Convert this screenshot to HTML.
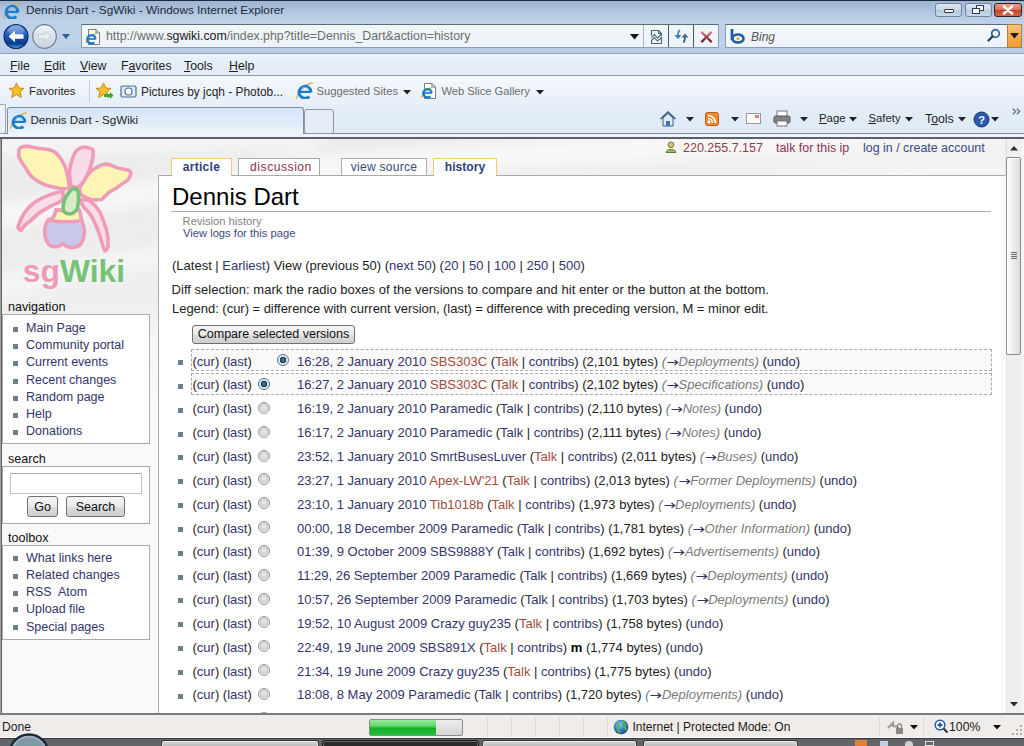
<!DOCTYPE html>
<html><head><meta charset="utf-8">
<style>
*{margin:0;padding:0;box-sizing:border-box}
html,body{width:1024px;height:746px;overflow:hidden;background:#dfe8f4;font-family:"Liberation Sans",sans-serif}
.a{position:absolute}
.ui{font-family:"Liberation Sans",sans-serif;font-size:12px;color:#1e1e1e;white-space:nowrap}
/* title bar */
#title{left:0;top:0;width:1024px;height:21px;background:linear-gradient(#9fb4cf,#b3c7e0 60%,#bcd0e8);border-top:1px solid #1d2b3e}
#nav{left:0;top:21px;width:1024px;height:33px;background:linear-gradient(#bdd0e8,#bfd2e9 70%,#b7cbe4);border-bottom:1px solid #8fa2b8}
#menu{left:0;top:54px;width:1024px;height:22px;background:linear-gradient(#ecf6f7,#e6eff9 30%,#e2ebf7);border-bottom:1px solid #8a98aa}
#fav{left:0;top:76px;width:1024px;height:30px;background:linear-gradient(#f5f9fd,#e6eef8)}
#tabs{left:0;top:106px;width:1024px;height:28px;background:linear-gradient(#e4edf8,#dfeaf6);border-bottom:1px solid #7f8c98}
#darkline{left:0;top:134px;width:1024px;height:5px;background:linear-gradient(#eff5fb 0,#eff5fb 3px,#5c6066 3px,#5c6066 5px)}
#page{left:2px;top:139px;width:1003px;height:574px;background:#f9f9f9;overflow:hidden}
#status{left:0;top:713px;width:1024px;height:28px;background:#f0eeed;border-top:1px solid #8c8c8c}
#task{left:0;top:740px;width:1024px;height:6px;background:#4e535a}
.t{line-height:1;white-space:nowrap}
.t12{font-size:12.1px;line-height:1;white-space:nowrap}
.t13{font-size:13px;line-height:1;white-space:nowrap;color:#222}
.l{color:#34346a}.r{color:#a24c3e}.c{color:#7a7a7a;font-style:italic}
.tab{top:158px;height:18px;border:1px solid #aaa;border-bottom:none;background:#fff;font-size:12.1px;line-height:1;text-align:center;padding-top:1.9px;white-space:nowrap}
.btn{border:1px solid #707070;border-radius:3px;background:linear-gradient(#f4f4f4 0%,#ebebeb 50%,#dddddd 51%,#cfcfcf 100%);font-size:12.5px;line-height:1;text-align:center;padding-top:2px;color:#111;white-space:nowrap}
.bul{width:5px;height:5px;background:#6e7f8c}
.radio{width:12px;height:12px;border-radius:50%;border:1px solid #979797;background:radial-gradient(circle at 50% 45%,#ececec 0,#d6d6d6 3.3px,#c2c2c2 4px,#f4f4f4 4.8px)}
.radio.on{border-color:#4f6f86;background:radial-gradient(circle at 50% 50%,#5b8fae 0,#1d4a68 2.2px,#1b3f5a 3px,#dfe9f0 3.6px,#f4f8fb 100%)}
.arr{display:inline-block;vertical-align:baseline;margin-right:-0.5px}
.dash{border:1px dashed #aaa;background:#f9f9f9}
.t12b{font-size:12.6px;line-height:1;white-space:nowrap;color:#111}
.t12s{font-size:12.5px;line-height:1;white-space:nowrap}
.pbox{border:1px solid #aaa;background:#fff}
</style></head><body>

<!-- TITLE BAR -->
<div id="title" class="a"></div>
<svg class="a" style="left:3px;top:2px" width="17" height="17" viewBox="0 0 16 16">
 <path d="M0.8 15 C1.5 10 6.5 2.5 15.2 1" stroke="#d9b458" stroke-width="1.5" fill="none" stroke-linecap="round"/>
 <path d="M14.1 9.6 A5.6 5.6 0 1 0 12.5 13.6" stroke="#1b7ccc" stroke-width="2.7" fill="none"/>
 <path d="M3.3 9.3 H14.2" stroke="#1b7ccc" stroke-width="2.1"/>
 <path d="M5 7 A4 4 0 0 1 12 7" stroke="#8fd0f8" stroke-width="1" fill="none" opacity=".7"/>
</svg>
<div class="a ui" style="left:26px;top:2.6px;font-size:11.8px;color:#1b2a3b">Dennis Dart - SgWiki - Windows Internet Explorer</div>
<!-- window buttons -->
<div class="a" style="left:935px;top:3px;width:27px;height:14px;border:1px solid #6f84a0;border-radius:3px;background:linear-gradient(#dde7f3 0%,#c8d6e8 50%,#b6c8df 51%,#c8d8ec 100%)"></div>
<div class="a" style="left:944px;top:9px;width:10px;height:4px;border:1px solid #2e3b4c;background:#fff;border-radius:1px"></div>
<div class="a" style="left:965px;top:3px;width:27px;height:14px;border:1px solid #6f84a0;border-radius:3px;background:linear-gradient(#dde7f3 0%,#c8d6e8 50%,#b6c8df 51%,#c8d8ec 100%)"></div>
<div class="a" style="left:976px;top:5px;width:8px;height:6px;border:1.5px solid #2e3b4c;background:#fff"></div>
<div class="a" style="left:972px;top:8px;width:8px;height:6px;border:1.5px solid #2e3b4c;background:#fff"></div>
<div class="a" style="left:994px;top:3px;width:28px;height:14px;border:1px solid #3c1f1f;border-radius:3px;background:linear-gradient(#e8a092 0%,#d86c58 50%,#c2412a 51%,#d5664c 100%)"></div>
<svg class="a" style="left:1001px;top:5px" width="14" height="10" viewBox="0 0 14 10"><path d="M3 1.5 L11 8.5 M11 1.5 L3 8.5" stroke="#fff" stroke-width="2.6" stroke-linecap="round"/></svg>

<!-- NAV BAR -->
<div id="nav" class="a"></div>
<svg class="a" style="left:2px;top:22px" width="60" height="30" viewBox="0 0 60 30">
 <defs>
  <linearGradient id="bk" x1="0" y1="0" x2="0" y2="1"><stop offset="0" stop-color="#6fa6e8"/><stop offset=".45" stop-color="#1f57b8"/><stop offset=".8" stop-color="#0d3b8c"/><stop offset="1" stop-color="#3aa8e8"/></linearGradient>
  <linearGradient id="fw" x1="0" y1="0" x2="0" y2="1"><stop offset="0" stop-color="#f2f5f9"/><stop offset=".5" stop-color="#d9e1ea"/><stop offset="1" stop-color="#c6d2de"/></linearGradient>
 </defs>
 <circle cx="14" cy="14.5" r="12" fill="url(#bk)" stroke="#0e2c66" stroke-width="1.2"/>
 <ellipse cx="14" cy="8.5" rx="8" ry="4.5" fill="#fff" opacity=".22"/>
 <path d="M6.5 14.5 L13 8.8 L13 12.3 L21.5 12.3 L21.5 16.7 L13 16.7 L13 20.2 Z" fill="#fff"/>
 <circle cx="42.5" cy="14.5" r="11.8" fill="url(#fw)" stroke="#6f7f90" stroke-width="1.2"/>
 <path d="M49 14.5 L43 9.5 L43 12.5 L36 12.5 L36 16.5 L43 16.5 L43 19.5 Z" fill="#e8edf2" stroke="#c2ccd6" stroke-width=".8"/>
</svg>
<svg class="a" style="left:61px;top:33px" width="10" height="7" viewBox="0 0 10 7"><path d="M1 1 L9 1 L5 6 Z" fill="#2f5e92"/></svg>
<!-- address box -->
<div class="a" style="left:81px;top:24px;width:638px;height:24px;border:1px solid #8e9cad;border-top-color:#5d6b7c;background:linear-gradient(#eef7f6,#eef2fa)"></div>
<svg class="a" style="left:85px;top:28px" width="16" height="18" viewBox="0 0 16 18">
 <path d="M3.5 1.5 L11 1.5 L14.5 5 L14.5 16.5 L3.5 16.5 Z" fill="#fdfdfd" stroke="#7a7a7a" stroke-width="1"/>
 <path d="M11 1.5 L11 5 L14.5 5" stroke="#7a7a7a" stroke-width="1" fill="none"/>
 <path d="M0.8 15.5 C1.5 12 5 7 11 5.5" stroke="#d9b458" stroke-width="1.3" fill="none"/>
 <path d="M10.6 11.2 A4.2 4.2 0 1 0 9.4 14.2" stroke="#1b7ccc" stroke-width="2.2" fill="none"/>
 <path d="M2.5 11 H10.7" stroke="#1b7ccc" stroke-width="1.7"/>
</svg>
<div class="a ui" style="left:106px;top:29.4px;font-size:12.35px;color:#6d6d6d">http://www.<span style="color:#1a1a1a">sgwiki.com</span>/index.php?title=Dennis_Dart&amp;action=history</div>
<svg class="a" style="left:630px;top:34px" width="9" height="6" viewBox="0 0 9 6"><path d="M0 0 L9 0 L4.5 5.5 Z" fill="#111"/></svg>
<div class="a" style="left:668px;top:25px;width:1px;height:22px;background:#4a5868"></div>
<div class="a" style="left:693px;top:25px;width:1px;height:22px;background:#4a5868"></div>
<div class="a" style="left:643px;top:25px;width:1px;height:22px;background:#aab6c4"></div>
<svg class="a" style="left:650px;top:29px" width="13" height="16" viewBox="0 0 13 16">
 <path d="M1.5 7 L1.5 1.5 L8.5 1.5 L11.5 4.5 L11.5 7 M8.5 1.5 L8.5 4.5 L11.5 4.5" stroke="#456868" stroke-width="1.1" fill="none"/>
 <path d="M1.5 9 L4.5 5.5 L7.5 9 L11.5 5 M1.5 14.5 L1.5 11.5 L4.5 8.5 L7.5 12 L11.5 8.5 L11.5 14.5 Z" stroke="#456868" stroke-width="1.1" fill="none"/>
</svg>
<svg class="a" style="left:673px;top:29px" width="18" height="15" viewBox="0 0 18 15">
 <path d="M7 1 C5.5 2 5 3.5 5 6" stroke="#4d88c4" stroke-width="1.8" fill="none"/>
 <path d="M1.5 6 L8.5 6 L5 10 Z" fill="#3a7ab8"/>
 <path d="M10.5 13.5 C11.5 12 12 10 12 8" stroke="#2d4f86" stroke-width="1.8" fill="none"/>
 <path d="M8.5 8.5 L15.5 8.5 L12 4.5 Z" fill="#3f6aa8"/>
</svg>
<svg class="a" style="left:700px;top:31px" width="13" height="12" viewBox="0 0 13 12"><defs><linearGradient id="xg" x1="0" y1="0" x2="0" y2="1"><stop offset="0" stop-color="#d87080"/><stop offset="1" stop-color="#6a1a24"/></linearGradient></defs><path d="M2 1.5 L11 10.5 M11 1.5 L2 10.5" stroke="url(#xg)" stroke-width="2.3" stroke-linecap="round"/></svg>
<!-- search box -->
<div class="a" style="left:725px;top:24px;width:282px;height:24px;border:1px solid #8e9cad;border-top-color:#5d6b7c;border-right:none;background:linear-gradient(#f3f8f9,#eef2fa)"></div>
<div class="a" style="left:1007px;top:24px;width:15px;height:24px;border:1px solid #b08040;background:linear-gradient(#f5c37a,#ef9a30)"></div>
<svg class="a" style="left:1010px;top:33px" width="9" height="6" viewBox="0 0 9 6"><path d="M0 0 L9 0 L4.5 5.5 Z" fill="#2a1a0a"/></svg>
<svg class="a" style="left:729px;top:27px" width="18" height="18" viewBox="0 0 18 18">
 <path d="M3 2 L3 13" stroke="#1f5f9f" stroke-width="2.8"/>
 <ellipse cx="9" cy="11.5" rx="5.5" ry="4" fill="none" stroke="#1f5f9f" stroke-width="2.6"/>
 <circle cx="9" cy="11.5" r="1.6" fill="#f0a030"/>
</svg>
<div class="a ui" style="left:751px;top:30px;font-size:12px;font-style:italic;color:#555">Bing</div>
<svg class="a" style="left:987px;top:28px" width="14" height="14" viewBox="0 0 14 14">
 <circle cx="8.5" cy="5.5" r="3.8" fill="none" stroke="#2d6aa0" stroke-width="1.8"/>
 <path d="M5.7 8.3 L1.5 12.5" stroke="#1d3c5c" stroke-width="2.2" stroke-linecap="round"/>
</svg>

<!-- MENU BAR -->
<div id="menu" class="a"></div>
<div class="a ui" style="left:10px;top:59px;font-size:12.3px;color:#1e1e1e"><u>F</u>ile</div>
<div class="a ui" style="left:44px;top:59px;font-size:12.3px"><u>E</u>dit</div>
<div class="a ui" style="left:80px;top:59px;font-size:12.3px"><u>V</u>iew</div>
<div class="a ui" style="left:121px;top:59px;font-size:12.3px">F<u>a</u>vorites</div>
<div class="a ui" style="left:184px;top:59px;font-size:12.3px"><u>T</u>ools</div>
<div class="a ui" style="left:229px;top:59px;font-size:12.3px"><u>H</u>elp</div>

<!-- FAVORITES BAR -->
<div id="fav" class="a"></div>
<svg class="a" style="left:8px;top:82px" width="17" height="17" viewBox="0 0 17 17"><path d="M8.5 1 L10.8 6 L16 6.4 L12 9.8 L13.3 15.5 L8.5 12.5 L3.7 15.5 L5 9.8 L1 6.4 L6.2 6 Z" fill="#f6c12c" stroke="#c98a15" stroke-width="1"/></svg>
<div class="a ui" style="left:29px;top:85px;font-size:11.3px">Favorites</div>
<div class="a" style="left:89px;top:80px;width:1px;height:22px;background:#c2ccd8"></div>
<svg class="a" style="left:95px;top:82px" width="19" height="18" viewBox="0 0 19 18"><path d="M8.5 1 L10.8 6 L16 6.4 L12 9.8 L13.3 15.5 L8.5 12.5 L3.7 15.5 L5 9.8 L1 6.4 L6.2 6 Z" fill="#f6c12c" stroke="#c98a15" stroke-width="1"/><path d="M9 12 L15 12 L15 10 L18.5 13.5 L15 17 L15 15 L9 15 Z" fill="#3caa3c"/></svg>
<svg class="a" style="left:120px;top:84px" width="17" height="14" viewBox="0 0 17 14"><rect x="1" y="2" width="15" height="11" rx="1.5" fill="#dfe9f3" stroke="#4a6f98" stroke-width="1.2"/><circle cx="8.5" cy="7.5" r="3.5" fill="#fff" stroke="#4a6f98" stroke-width="1.2"/></svg>
<div class="a ui" style="left:141px;top:84.5px;font-size:11.9px">Pictures by jcqh - Photob...</div>
<svg class="a" style="left:296px;top:82px" width="17" height="17" viewBox="0 0 16 16">
 <path d="M0.8 15 C1.5 10 6.5 2.5 15.2 1" stroke="#d9b458" stroke-width="1.5" fill="none" stroke-linecap="round"/>
 <path d="M14.1 9.6 A5.6 5.6 0 1 0 12.5 13.6" stroke="#1b7ccc" stroke-width="2.7" fill="none"/>
 <path d="M3.3 9.3 H14.2" stroke="#1b7ccc" stroke-width="2.1"/>
 <path d="M5 7 A4 4 0 0 1 12 7" stroke="#8fd0f8" stroke-width="1" fill="none" opacity=".7"/>
</svg>
<div class="a ui" style="left:316.5px;top:85px;font-size:11.2px;color:#6b6b6b">Suggested Sites</div>
<svg class="a" style="left:402.5px;top:89.5px" width="8" height="5" viewBox="0 0 8 5"><path d="M0 0 L8 0 L4 4.5 Z" fill="#222"/></svg>
<svg class="a" style="left:421px;top:82px" width="16" height="18" viewBox="0 0 16 18">
 <path d="M3.5 1.5 L11 1.5 L14.5 5 L14.5 16.5 L3.5 16.5 Z" fill="#fdfdfd" stroke="#7a7a7a" stroke-width="1"/>
 <path d="M11 1.5 L11 5 L14.5 5" stroke="#7a7a7a" stroke-width="1" fill="none"/>
 <path d="M0.8 15.5 C1.5 12 5 7 11 5.5" stroke="#d9b458" stroke-width="1.3" fill="none"/>
 <path d="M10.6 11.2 A4.2 4.2 0 1 0 9.4 14.2" stroke="#1b7ccc" stroke-width="2.2" fill="none"/>
 <path d="M2.5 11 H10.7" stroke="#1b7ccc" stroke-width="1.7"/>
</svg>
<div class="a ui" style="left:441.5px;top:85px;font-size:11.15px;color:#6b6b6b">Web Slice Gallery</div>
<svg class="a" style="left:536px;top:89.5px" width="8" height="5" viewBox="0 0 8 5"><path d="M0 0 L8 0 L4 4.5 Z" fill="#222"/></svg>

<!-- TAB BAR -->
<div id="tabs" class="a"></div>
<div class="a" style="left:-6px;top:104px;width:12px;height:30px;border:1px solid #9aa9bb;border-radius:0 0 3px 0;background:linear-gradient(#eef3f9,#e6eef8)"></div>
<div class="a" style="left:7px;top:107px;width:297px;height:27px;border:1px solid #7d8ea3;border-bottom:none;border-radius:3px 3px 0 0;background:linear-gradient(#d4e4f7,#e2ecf9 60%,#eef4fb)"></div>
<svg class="a" style="left:10px;top:112px" width="17" height="17" viewBox="0 0 16 16">
 <path d="M0.8 15 C1.5 10 6.5 2.5 15.2 1" stroke="#d9b458" stroke-width="1.5" fill="none" stroke-linecap="round"/>
 <path d="M14.1 9.6 A5.6 5.6 0 1 0 12.5 13.6" stroke="#1b7ccc" stroke-width="2.7" fill="none"/>
 <path d="M3.3 9.3 H14.2" stroke="#1b7ccc" stroke-width="2.1"/>
 <path d="M5 7 A4 4 0 0 1 12 7" stroke="#8fd0f8" stroke-width="1" fill="none" opacity=".7"/>
</svg>
<div class="a ui" style="left:30.5px;top:113.3px;font-size:11.6px">Dennis Dart - SgWiki</div>
<div class="a" style="left:304px;top:109px;width:30px;height:25px;border:1px solid #8c98a8;border-radius:3px;background:#e3ecf7"></div>
<!-- command bar -->
<svg class="a" style="left:659px;top:110px" width="18" height="18" viewBox="0 0 18 18">
 <path d="M1.5 9 L9 2 L16.5 9" stroke="#3a5f8a" stroke-width="1.6" fill="none"/>
 <path d="M4 8 L4 16 L14 16 L14 8 L9 3.5 Z" fill="#dfe8f2" stroke="#3a5f8a" stroke-width="1"/>
 <rect x="7" y="11" width="4" height="5" fill="#3a74b4"/>
</svg>
<svg class="a" style="left:686px;top:117px" width="8" height="5" viewBox="0 0 8 5"><path d="M0 0 L8 0 L4 4.5 Z" fill="#222"/></svg>
<svg class="a" style="left:705px;top:112px" width="14" height="14" viewBox="0 0 14 14"><rect x=".5" y=".5" width="13" height="13" rx="2" fill="#ee8a2c" stroke="#b4601a"/><circle cx="4" cy="10" r="1.4" fill="#fff"/><path d="M3 6.5 A4.5 4.5 0 0 1 7.5 11 M3 3.5 A7.5 7.5 0 0 1 10.5 11" stroke="#fff" stroke-width="1.6" fill="none"/></svg>
<svg class="a" style="left:731px;top:117px" width="8" height="5" viewBox="0 0 8 5"><path d="M0 0 L8 0 L4 4.5 Z" fill="#222"/></svg>
<svg class="a" style="left:746px;top:113px" width="15" height="11" viewBox="0 0 15 11"><rect x=".5" y=".5" width="14" height="10" fill="#fafafa" stroke="#9a9a9a"/><rect x="9" y="2" width="4" height="3" fill="#d08080"/></svg>
<svg class="a" style="left:773px;top:110px" width="18" height="17" viewBox="0 0 18 17"><rect x="4" y="1" width="10" height="6" fill="#fff" stroke="#777"/><rect x="1" y="6" width="16" height="7" rx="1.5" fill="#7d8389" stroke="#555"/><rect x="4" y="11" width="10" height="5" fill="#fff" stroke="#777"/></svg>
<svg class="a" style="left:800px;top:117px" width="8" height="5" viewBox="0 0 8 5"><path d="M0 0 L8 0 L4 4.5 Z" fill="#222"/></svg>
<div class="a ui" style="left:819px;top:111.7px;font-size:11.4px"><u>P</u>age</div>
<svg class="a" style="left:849px;top:117px" width="8" height="5" viewBox="0 0 8 5"><path d="M0 0 L8 0 L4 4.5 Z" fill="#222"/></svg>
<div class="a ui" style="left:868.5px;top:111.7px;font-size:11.3px"><u>S</u>afety</div>
<svg class="a" style="left:905px;top:117px" width="8" height="5" viewBox="0 0 8 5"><path d="M0 0 L8 0 L4 4.5 Z" fill="#222"/></svg>
<div class="a ui" style="left:925px;top:111.7px;font-size:12.3px">T<u>o</u>ols</div>
<svg class="a" style="left:958px;top:117px" width="8" height="5" viewBox="0 0 8 5"><path d="M0 0 L8 0 L4 4.5 Z" fill="#222"/></svg>
<svg class="a" style="left:973px;top:111px" width="17" height="17" viewBox="0 0 17 17"><circle cx="8.5" cy="8.5" r="7.5" fill="#2c58b0" stroke="#1a3670"/><text x="8.5" y="13" font-family="Liberation Sans" font-weight="bold" font-size="11" fill="#fff" text-anchor="middle">?</text></svg>
<svg class="a" style="left:991px;top:117px" width="8" height="5" viewBox="0 0 8 5"><path d="M0 0 L8 0 L4 4.5 Z" fill="#222"/></svg>
<svg class="a" style="left:1012px;top:108px" width="9" height="7" viewBox="0 0 9 7"><path d="M0.8 0.8 L3.6 3.5 L0.8 6.2 M4.8 0.8 L7.6 3.5 L4.8 6.2" stroke="#5f6f80" stroke-width="1.3" fill="none"/></svg>

<div id="darkline" class="a"></div>

<!-- PAGE -->
<div class="a" style="left:1px;top:139px;width:1px;height:575px;background:#626262"></div>
<div id="page" class="a"></div>
<svg class="a" style="left:2px;top:139px" width="1003" height="260" viewBox="0 0 1003 260">
 <defs>
  <linearGradient id="bgg" x1="0" y1="0" x2="0" y2="1"><stop offset="0" stop-color="#ebebeb"/><stop offset=".55" stop-color="#ededed"/><stop offset="1" stop-color="#f9f9f9"/></linearGradient>
  <filter id="bl" x="-20%" y="-50%" width="140%" height="200%"><feGaussianBlur stdDeviation="9"/></filter>
 </defs>
 <rect width="1003" height="260" fill="url(#bgg)"/>
 <g filter="url(#bl)" fill="none" stroke="#fdfdfd">
  <path d="M-30 82 C120 60 260 30 420 20 C600 8 800 0 1040 -10" stroke-width="18" stroke-opacity=".9"/>
  <path d="M-30 150 C100 130 240 100 380 80 C560 55 760 40 1040 30" stroke-width="14" stroke-opacity=".75"/>
  <path d="M-30 8 C100 4 200 2 320 0" stroke-width="14" stroke-opacity=".8"/>
  <path d="M300 40 C480 25 700 18 1040 14" stroke-width="8" stroke-opacity=".6"/>
  <path d="M-30 230 C120 210 260 190 420 170" stroke-width="16" stroke-opacity=".7"/>
 </g>
</svg>

<!-- logo -->
<svg class="a" style="left:2px;top:139px" width="150" height="156" viewBox="0 0 150 156">
 <g stroke="#f09cb8" stroke-width="3.6" stroke-linejoin="round" stroke-linecap="round">
  <path d="M61 52.5 C54 53 40 58 32 63.7 C25 69 19 78 16 87.9 C16.5 90.5 18.5 91.5 19.3 91.1 C22 86 25 84 28.9 81.5 C34 76 38 73 43.4 70.2 C48 67 53 65 56.3 63.7 L61 60.5 Z" fill="#f8dcea"/>
  <path d="M77.2 60.5 C82 60.5 86 61 88.4 62.1 C93 66 96 70 98.1 73.4 C101 80 103 86 104.5 91.1 C106 97 106.5 102 106.1 107.2 C105.5 110 104 112 102.9 112 C100.5 107 99.5 102 98.1 97.5 C96 91 94 86 91.7 81.5 C89 76 86 72 82 68.6 Z" fill="#f8dcea"/>
  <path d="M16.8 10.7 C19 7.5 22 7 25.7 7.4 C31 8 36 9.5 40.2 9.8 C44 10.2 47 10.5 49.8 11.5 C52.5 12.5 54.5 14 56.3 16.3 C59 19.5 61 23 62.7 26.7 C64 30 65 34 65.9 38 C66.7 42 67.2 46 67.5 49.3 C63 50 60 49.8 56.3 49.3 C51 48 47 47 43.4 46 C39 44 35 42 32.1 39.6 C29 37 27 35 25.7 32.4 C24 29 22.5 27 20.9 25.1 C19 22 17.5 20 16.8 17.1 Z" fill="#fdf5b4"/>
  <path d="M77.2 49.3 C80 44 82.5 40 85.2 36.4 C88 33 91 30 94.9 28.4 C98 26.5 101 25 104.5 25.1 C108 25.3 111 27 114.2 28.4 C118 30 123 30.5 127.1 31.6 C128.5 32.5 129 34 128.7 35.6 C128 38 127 40 125.5 41.2 C122 44 118 46 114.2 49.3 C111 51 108.5 52 106.1 54.1 C104 56.5 102 58.5 99.7 60.5 C96 61 92 61 88.4 60.5 C85 59 82 57.5 78.8 55.7 Z" fill="#fdf5b4"/>
  <path d="M69.1 47.7 C68 42 67.2 38 67.5 33.2 C68 28 69 23 70.8 18.7 C72 15 73.5 12.5 75.6 10.7 C78 8.8 81 8 83.6 8.2 C86.5 8.5 89 9.3 90.9 10.7 C91.5 14 91 18 90.1 21.9 C89 27 87.5 32 85.2 36.4 C83 41 80.5 44.5 77.2 47.7 Z" fill="#f8dcea"/>
  <path d="M46 81 C52 78.5 70 78.5 79 81 C83.5 88 83.5 98 78.5 105.5 C73 110 65 109 61 104.5 C57 108.5 50 109 46.5 105 C41.5 98 41.5 88 46 81 Z" fill="#c8c9ea"/>
  <path d="M54 70.5 C60 72 71 72 77 70.5 C79 74 78.5 78 80 81.5 C70 83 58 83 48.5 81.5 C52 78.5 53.5 74 54 70.5 Z" fill="#fdf5b4"/>
 </g>
 <path d="M72.4 49.3 C74.5 50 76 51.5 76.4 54.1 C77 59 76.5 64 75.6 68.6 C74.5 72 71 75 67.5 75 C64 74.5 61.5 72.5 61.1 70.2 C61 65 62 61 64.3 57.3 C66.5 53.5 69 50 72.4 49.3 Z" fill="#d8ebc5" stroke="#77c177" stroke-width="3.6" stroke-linejoin="round"/>
 <text x="20.8" y="142.6" font-family="Liberation Sans" font-weight="bold" font-size="31.8" fill="#ef9ab6">sg<tspan fill="#76c377">Wiki</tspan></text>
</svg>

<!-- personal tools -->
<svg class="a" style="left:665px;top:141px" width="12" height="12" viewBox="0 0 12 12"><circle cx="6" cy="3.8" r="2.8" fill="#d9c07a" stroke="#6f7a3a"/><path d="M1 11.5 C1 7.5 11 7.5 11 11.5 Z" fill="#9fc06a" stroke="#5a7a2a"/></svg>
<div class="a t12" style="left:683px;top:142px;font-size:12.5px;color:#943a48">220.255.7.157</div>
<div class="a t12" style="left:776px;top:142.2px;font-size:12.45px;color:#8e3058">talk for this ip</div>
<div class="a t12" style="left:863px;top:142.2px;font-size:12.45px;color:#3a4a7f">log in / create account</div>

<!-- tabs -->
<div class="a tab" style="left:171px;width:61px;border-color:#f3cd6a"><b style="color:#2f3f7a;letter-spacing:.24px">article</b></div>
<div class="a tab" style="left:238px;width:82px;color:#8e3048;letter-spacing:.53px;padding-left:4px">discussion</div>
<div class="a tab" style="left:341px;width:86px;color:#3a4a7f;letter-spacing:.23px">view source</div>
<div class="a tab" style="left:433px;width:64px;border-color:#f3cd6a"><b style="color:#2f3f7a">history</b></div>

<!-- content box -->
<div class="a" style="left:158px;top:175px;width:847px;height:538px;background:#fff;border-left:1px solid #aaa;border-top:1px solid #aaa"></div>
<div class="a" style="left:172px;top:175px;width:59px;height:1px;background:#fff"></div>
<div class="a" style="left:434px;top:175px;width:62px;height:1px;background:#fff"></div>

<div class="a t" style="left:172px;top:185.2px;font-size:24px;color:#000">Dennis Dart</div>
<div class="a" style="left:171px;top:211px;width:820px;height:1px;background:#aaa"></div>
<div class="a t" style="left:182.6px;top:215.5px;font-size:11.2px;color:#7f7f7f">Revision history</div>
<div class="a t" style="left:183px;top:228.1px;font-size:11.2px;color:#3a4a7f">View logs for this page</div>

<div class="a t13" style="left:172px;top:258.5px">(Latest | <span class="l">Earliest</span>) View (previous 50) (<span class="l">next 50</span>) (<span class="l">20</span> | <span class="l">50</span> | <span class="l">100</span> | <span class="l">250</span> | <span class="l">500</span>)</div>
<div class="a t13" style="left:171.6px;top:282.7px;letter-spacing:.02px">Diff selection: mark the radio boxes of the versions to compare and hit enter or the button at the bottom.</div>
<div class="a t13" style="left:172px;top:301.7px;letter-spacing:-.03px">Legend: (cur) = difference with current version, (last) = difference with preceding version, M = minor edit.</div>

<div class="a btn" style="left:192px;top:325px;width:163px;height:19px">Compare selected versions</div>

<div id="rows">
<div class="a dash" style="left:191px;top:349.4px;width:801px;height:21.5px"></div>
<div class="a bul" style="left:178px;top:360.0px"></div>
<div class="a t13" style="left:192.5px;top:354.6px">(<span class="l">cur</span>) (<span class="l">last</span>)</div>
<div class="a radio on" style="left:277px;top:354.2px"></div>
<div class="a t13" style="left:297px;top:354.6px"><span class="l">16:28, 2 January 2010</span> <span class="r">SBS303C</span> (<span class="r">Talk</span> | <span class="l">contribs</span>) (2,101 bytes) <span class="c">(<svg class="arr" width="13" height="8" viewBox="0 0 13 8"><path d="M1.5 4.5 H11.5 M8.5 2 L11.8 4.5 L8.5 7" stroke="#34345e" stroke-width="1.1" fill="none"/></svg>Deployments)</span> (<span class="l">undo</span>)</div>
<div class="a dash" style="left:191px;top:373.2px;width:801px;height:21.5px"></div>
<div class="a bul" style="left:178px;top:383.8px"></div>
<div class="a t13" style="left:192.5px;top:378.4px">(<span class="l">cur</span>) (<span class="l">last</span>)</div>
<div class="a radio on" style="left:258px;top:378.0px"></div>
<div class="a t13" style="left:297px;top:378.4px"><span class="l">16:27, 2 January 2010</span> <span class="r">SBS303C</span> (<span class="r">Talk</span> | <span class="l">contribs</span>) (2,102 bytes) <span class="c">(<svg class="arr" width="13" height="8" viewBox="0 0 13 8"><path d="M1.5 4.5 H11.5 M8.5 2 L11.8 4.5 L8.5 7" stroke="#34345e" stroke-width="1.1" fill="none"/></svg>Specifications)</span> (<span class="l">undo</span>)</div>
<div class="a bul" style="left:178px;top:407.7px"></div>
<div class="a t13" style="left:192.5px;top:402.3px">(<span class="l">cur</span>) (<span class="l">last</span>)</div>
<div class="a radio" style="left:258px;top:401.9px"></div>
<div class="a t13" style="left:297px;top:402.3px"><span class="l">16:19, 2 January 2010</span> <span class="l">Paramedic</span> (<span class="l">Talk</span> | <span class="l">contribs</span>) (2,110 bytes) <span class="c">(<svg class="arr" width="13" height="8" viewBox="0 0 13 8"><path d="M1.5 4.5 H11.5 M8.5 2 L11.8 4.5 L8.5 7" stroke="#34345e" stroke-width="1.1" fill="none"/></svg>Notes)</span> (<span class="l">undo</span>)</div>
<div class="a bul" style="left:178px;top:431.5px"></div>
<div class="a t13" style="left:192.5px;top:426.1px">(<span class="l">cur</span>) (<span class="l">last</span>)</div>
<div class="a radio" style="left:258px;top:425.7px"></div>
<div class="a t13" style="left:297px;top:426.1px"><span class="l">16:17, 2 January 2010</span> <span class="l">Paramedic</span> (<span class="l">Talk</span> | <span class="l">contribs</span>) (2,111 bytes) <span class="c">(<svg class="arr" width="13" height="8" viewBox="0 0 13 8"><path d="M1.5 4.5 H11.5 M8.5 2 L11.8 4.5 L8.5 7" stroke="#34345e" stroke-width="1.1" fill="none"/></svg>Notes)</span> (<span class="l">undo</span>)</div>
<div class="a bul" style="left:178px;top:455.4px"></div>
<div class="a t13" style="left:192.5px;top:450.0px">(<span class="l">cur</span>) (<span class="l">last</span>)</div>
<div class="a radio" style="left:258px;top:449.6px"></div>
<div class="a t13" style="left:297px;top:450.0px"><span class="l">23:52, 1 January 2010</span> <span class="l">SmrtBusesLuver</span> (<span class="r">Talk</span> | <span class="l">contribs</span>) (2,011 bytes) <span class="c">(<svg class="arr" width="13" height="8" viewBox="0 0 13 8"><path d="M1.5 4.5 H11.5 M8.5 2 L11.8 4.5 L8.5 7" stroke="#34345e" stroke-width="1.1" fill="none"/></svg>Buses)</span> (<span class="l">undo</span>)</div>
<div class="a bul" style="left:178px;top:479.2px"></div>
<div class="a t13" style="left:192.5px;top:473.8px">(<span class="l">cur</span>) (<span class="l">last</span>)</div>
<div class="a radio" style="left:258px;top:473.4px"></div>
<div class="a t13" style="left:297px;top:473.8px"><span class="l">23:27, 1 January 2010</span> <span class="r">Apex-LW'21</span> (<span class="r">Talk</span> | <span class="l">contribs</span>) (2,013 bytes) <span class="c">(<svg class="arr" width="13" height="8" viewBox="0 0 13 8"><path d="M1.5 4.5 H11.5 M8.5 2 L11.8 4.5 L8.5 7" stroke="#34345e" stroke-width="1.1" fill="none"/></svg>Former Deployments)</span> (<span class="l">undo</span>)</div>
<div class="a bul" style="left:178px;top:503.0px"></div>
<div class="a t13" style="left:192.5px;top:497.6px">(<span class="l">cur</span>) (<span class="l">last</span>)</div>
<div class="a radio" style="left:258px;top:497.2px"></div>
<div class="a t13" style="left:297px;top:497.6px"><span class="l">23:10, 1 January 2010</span> <span class="r">Tib1018b</span> (<span class="r">Talk</span> | <span class="l">contribs</span>) (1,973 bytes) <span class="c">(<svg class="arr" width="13" height="8" viewBox="0 0 13 8"><path d="M1.5 4.5 H11.5 M8.5 2 L11.8 4.5 L8.5 7" stroke="#34345e" stroke-width="1.1" fill="none"/></svg>Deployments)</span> (<span class="l">undo</span>)</div>
<div class="a bul" style="left:178px;top:526.9px"></div>
<div class="a t13" style="left:192.5px;top:521.5px">(<span class="l">cur</span>) (<span class="l">last</span>)</div>
<div class="a radio" style="left:258px;top:521.1px"></div>
<div class="a t13" style="left:297px;top:521.5px"><span class="l">00:00, 18 December 2009</span> <span class="l">Paramedic</span> (<span class="l">Talk</span> | <span class="l">contribs</span>) (1,781 bytes) <span class="c">(<svg class="arr" width="13" height="8" viewBox="0 0 13 8"><path d="M1.5 4.5 H11.5 M8.5 2 L11.8 4.5 L8.5 7" stroke="#34345e" stroke-width="1.1" fill="none"/></svg>Other Information)</span> (<span class="l">undo</span>)</div>
<div class="a bul" style="left:178px;top:550.7px"></div>
<div class="a t13" style="left:192.5px;top:545.3px">(<span class="l">cur</span>) (<span class="l">last</span>)</div>
<div class="a radio" style="left:258px;top:544.9px"></div>
<div class="a t13" style="left:297px;top:545.3px"><span class="l">01:39, 9 October 2009</span> <span class="l">SBS9888Y</span> (<span class="l">Talk</span> | <span class="l">contribs</span>) (1,692 bytes) <span class="c">(<svg class="arr" width="13" height="8" viewBox="0 0 13 8"><path d="M1.5 4.5 H11.5 M8.5 2 L11.8 4.5 L8.5 7" stroke="#34345e" stroke-width="1.1" fill="none"/></svg>Advertisements)</span> (<span class="l">undo</span>)</div>
<div class="a bul" style="left:178px;top:574.6px"></div>
<div class="a t13" style="left:192.5px;top:569.2px">(<span class="l">cur</span>) (<span class="l">last</span>)</div>
<div class="a radio" style="left:258px;top:568.8px"></div>
<div class="a t13" style="left:297px;top:569.2px"><span class="l">11:29, 26 September 2009</span> <span class="l">Paramedic</span> (<span class="l">Talk</span> | <span class="l">contribs</span>) (1,669 bytes) <span class="c">(<svg class="arr" width="13" height="8" viewBox="0 0 13 8"><path d="M1.5 4.5 H11.5 M8.5 2 L11.8 4.5 L8.5 7" stroke="#34345e" stroke-width="1.1" fill="none"/></svg>Deployments)</span> (<span class="l">undo</span>)</div>
<div class="a bul" style="left:178px;top:598.4px"></div>
<div class="a t13" style="left:192.5px;top:593.0px">(<span class="l">cur</span>) (<span class="l">last</span>)</div>
<div class="a radio" style="left:258px;top:592.6px"></div>
<div class="a t13" style="left:297px;top:593.0px"><span class="l">10:57, 26 September 2009</span> <span class="l">Paramedic</span> (<span class="l">Talk</span> | <span class="l">contribs</span>) (1,703 bytes) <span class="c">(<svg class="arr" width="13" height="8" viewBox="0 0 13 8"><path d="M1.5 4.5 H11.5 M8.5 2 L11.8 4.5 L8.5 7" stroke="#34345e" stroke-width="1.1" fill="none"/></svg>Deployments)</span> (<span class="l">undo</span>)</div>
<div class="a bul" style="left:178px;top:622.2px"></div>
<div class="a t13" style="left:192.5px;top:616.8px">(<span class="l">cur</span>) (<span class="l">last</span>)</div>
<div class="a radio" style="left:258px;top:616.4px"></div>
<div class="a t13" style="left:297px;top:616.8px"><span class="l">19:52, 10 August 2009</span> <span class="l">Crazy guy235</span> (<span class="r">Talk</span> | <span class="l">contribs</span>) (1,758 bytes) (<span class="l">undo</span>)</div>
<div class="a bul" style="left:178px;top:646.1px"></div>
<div class="a t13" style="left:192.5px;top:640.7px">(<span class="l">cur</span>) (<span class="l">last</span>)</div>
<div class="a radio" style="left:258px;top:640.3px"></div>
<div class="a t13" style="left:297px;top:640.7px"><span class="l">22:49, 19 June 2009</span> <span class="l">SBS891X</span> (<span class="r">Talk</span> | <span class="l">contribs</span>) <b style="color:#000">m</b> (1,774 bytes) (<span class="l">undo</span>)</div>
<div class="a bul" style="left:178px;top:669.9px"></div>
<div class="a t13" style="left:192.5px;top:664.5px">(<span class="l">cur</span>) (<span class="l">last</span>)</div>
<div class="a radio" style="left:258px;top:664.1px"></div>
<div class="a t13" style="left:297px;top:664.5px"><span class="l">21:34, 19 June 2009</span> <span class="l">Crazy guy235</span> (<span class="r">Talk</span> | <span class="l">contribs</span>) (1,775 bytes) (<span class="l">undo</span>)</div>
<div class="a bul" style="left:178px;top:693.8px"></div>
<div class="a t13" style="left:192.5px;top:688.4px">(<span class="l">cur</span>) (<span class="l">last</span>)</div>
<div class="a radio" style="left:258px;top:688.0px"></div>
<div class="a t13" style="left:297px;top:688.4px"><span class="l">18:08, 8 May 2009</span> <span class="l">Paramedic</span> (<span class="l">Talk</span> | <span class="l">contribs</span>) (1,720 bytes) <span class="c">(<svg class="arr" width="13" height="8" viewBox="0 0 13 8"><path d="M1.5 4.5 H11.5 M8.5 2 L11.8 4.5 L8.5 7" stroke="#34345e" stroke-width="1.1" fill="none"/></svg>Deployments)</span> (<span class="l">undo</span>)</div>
<div class="a bul" style="left:178px;top:717.6px"></div>
<div class="a t13" style="left:192.5px;top:712.2px">(<span class="l">cur</span>) (<span class="l">last</span>)</div>
<div class="a radio" style="left:258px;top:711.8px"></div>
<div class="a t13" style="left:297px;top:712.2px"><span class="l">17:00, 1 May 2009</span> <span class="l">Paramedic</span> (<span class="l">Talk</span> | <span class="l">contribs</span>) (1,700 bytes) <span class="c">(<svg class="arr" width="13" height="8" viewBox="0 0 13 8"><path d="M1.5 4.5 H11.5 M8.5 2 L11.8 4.5 L8.5 7" stroke="#34345e" stroke-width="1.1" fill="none"/></svg>Deployments)</span> (<span class="l">undo</span>)</div>
</div><!--/rows-->
<!-- SIDEBAR -->
<div class="a t12b" style="left:8px;top:301.0px">navigation</div>
<div class="a pbox" style="left:2px;top:314px;width:148px;height:130px"></div>
<div class="a bul" style="left:13px;top:326.8px"></div><div class="a t12s l" style="left:26px;top:322.1px">Main Page</div>
<div class="a bul" style="left:13px;top:343.7px"></div><div class="a t12s l" style="left:26px;top:339.0px">Community portal</div>
<div class="a bul" style="left:13px;top:360.8px"></div><div class="a t12s l" style="left:26px;top:356.1px">Current events</div>
<div class="a bul" style="left:13px;top:378.5px"></div><div class="a t12s l" style="left:26px;top:373.8px">Recent changes</div>
<div class="a bul" style="left:13px;top:395.6px"></div><div class="a t12s l" style="left:26px;top:390.9px">Random page</div>
<div class="a bul" style="left:13px;top:412.7px"></div><div class="a t12s l" style="left:26px;top:408.0px">Help</div>
<div class="a bul" style="left:13px;top:429.8px"></div><div class="a t12s l" style="left:26px;top:425.1px">Donations</div>

<div class="a t12b" style="left:8px;top:452.6px">search</div>
<div class="a pbox" style="left:2px;top:466px;width:148px;height:58px"></div>
<div class="a" style="left:10px;top:473px;width:132px;height:21px;border:1px solid #c5c5c5;border-top-color:#a9a9a9;background:#fff"></div>
<div class="a btn" style="left:27px;top:496px;width:31px;height:21px;padding-top:4px;font-size:12.5px">Go</div>
<div class="a btn" style="left:66px;top:496px;width:59px;height:21px;padding-top:4px;font-size:12.5px">Search</div>

<div class="a t12b" style="left:8px;top:531.7px">toolbox</div>
<div class="a pbox" style="left:2px;top:545px;width:148px;height:95px"></div>
<div class="a bul" style="left:13px;top:556.4px"></div><div class="a t12s l" style="left:26px;top:551.7px">What links here</div>
<div class="a bul" style="left:13px;top:573.8px"></div><div class="a t12s l" style="left:26px;top:569.1px">Related changes</div>
<div class="a bul" style="left:13px;top:590.7px"></div><div class="a t12s l" style="left:26px;top:586px">RSS&nbsp; Atom</div>
<div class="a bul" style="left:13px;top:607.4px"></div><div class="a t12s l" style="left:26px;top:602.7px">Upload file</div>
<div class="a bul" style="left:13px;top:625.3px"></div><div class="a t12s l" style="left:26px;top:620.6px">Special pages</div>

<!-- scrollbar -->
<div class="a" style="left:1001px;top:176px;width:5px;height:538px;background:#fafafa"></div>
<div class="a" style="left:1006px;top:139px;width:18px;height:575px;background:linear-gradient(90deg,#e2e2e2 0,#e2e2e2 1px,#efefef 1px,#efefef 15px,#f5f5f5 16px)"></div>
<svg class="a" style="left:1010px;top:146px" width="8" height="5" viewBox="0 0 8 5"><path d="M0 4.5 L4 0 L8 4.5 Z" fill="#2a2a2a"/></svg>
<div class="a" style="left:1006px;top:157px;width:15px;height:198px;border:1px solid #8a8a8a;border-radius:2px;background:linear-gradient(90deg,#fdfdfd,#f0f0f0 40%,#dcdcdc);box-shadow:inset 1px 1px 0 #fff"></div>
<div class="a" style="left:1011px;top:252px;width:6px;height:1px;background:#6a6a6a;box-shadow:0 2px 0 #6a6a6a,0 4px 0 #6a6a6a,0 6px 0 #6a6a6a"></div>
<svg class="a" style="left:1010px;top:702px" width="8" height="5" viewBox="0 0 8 5"><path d="M0 0 L8 0 L4 4.5 Z" fill="#2a2a2a"/></svg>
<div class="a" style="left:0;top:139px;width:1px;height:575px;background:#a0a0a0"></div>

<!-- STATUS BAR -->
<div class="a" style="left:0;top:713px;width:1024px;height:2px;background:#7b7b7b"></div>
<div class="a" style="left:0;top:715px;width:1024px;height:22px;background:#f0ecea"></div>
<div class="a ui" style="left:2px;top:719.8px;font-size:12.1px;color:#1a1a1a">Done</div>
<div class="a" style="left:369px;top:719px;width:94px;height:17px;border:1px solid #8c8c8c;border-radius:2px;background:linear-gradient(#ececec,#d6d6d6)"></div>
<div class="a" style="left:370px;top:720px;width:66px;height:15px;background:linear-gradient(#9aeaa0 0%,#5fd86a 40%,#14b02a 55%,#25c03a 100%)"></div>
<div class="a" style="left:487px;top:717px;width:1px;height:20px;background:#dcdcdc;box-shadow:24px 0 0 #dcdcdc,48px 0 0 #dcdcdc,72px 0 0 #dcdcdc,96px 0 0 #dcdcdc,120px 0 0 #dcdcdc"></div>
<svg class="a" style="left:613px;top:719px" width="16" height="16" viewBox="0 0 16 16"><defs><radialGradient id="gl" cx="40%" cy="35%" r="65%"><stop offset="0" stop-color="#8fd0f5"/><stop offset=".6" stop-color="#2a7ec0"/><stop offset="1" stop-color="#1b4f86"/></radialGradient></defs><circle cx="8" cy="8" r="7.3" fill="url(#gl)"/><path d="M4 4 C6 5 7 7 5 9 C4 10 6 12 7 14 M9 2 C11 4 13 5 12 8 C11 9 13 10 13 11" stroke="#5bb04a" stroke-width="2" fill="none"/></svg>
<div class="a ui" style="left:632.5px;top:720.3px;font-size:12px;color:#1a1a1a">Internet | Protected Mode: On</div>
<div class="a" style="left:879px;top:717px;width:1px;height:20px;background:#dcdcdc"></div>
<svg class="a" style="left:886px;top:720px" width="20" height="15" viewBox="0 0 20 15"><path d="M2 8 L7 3 L7 6 C10 6 12 7 13 9" stroke="#9a9a9a" stroke-width="2" fill="none"/><rect x="10" y="8" width="7" height="6" fill="#8a8a8a"/><path d="M11.5 8 L11.5 6 A2 2 0 0 1 15.5 6 L15.5 8" stroke="#8a8a8a" stroke-width="1.3" fill="none"/></svg>
<svg class="a" style="left:910px;top:725px" width="8" height="5" viewBox="0 0 8 5"><path d="M0 0 L8 0 L4 4.5 Z" fill="#111"/></svg>
<div class="a" style="left:923px;top:717px;width:1px;height:20px;background:#dcdcdc"></div>
<svg class="a" style="left:934px;top:719px" width="15" height="15" viewBox="0 0 15 15"><circle cx="6" cy="6" r="4.8" fill="#fff" stroke="#2a5da8" stroke-width="1.5"/><path d="M6 3.5 L6 8.5 M3.5 6 L8.5 6" stroke="#2a5da8" stroke-width="1.8"/><path d="M9.5 9.5 L13.5 13.5" stroke="#333" stroke-width="2.2"/></svg>
<div class="a ui" style="left:949px;top:720.3px;font-size:12.3px;color:#1a1a1a">100%</div>
<svg class="a" style="left:993px;top:725px" width="8" height="5" viewBox="0 0 8 5"><path d="M0 0 L8 0 L4 4.5 Z" fill="#111"/></svg>
<div class="a" style="left:1016px;top:729px;width:2px;height:2px;background:#b0b0b0;box-shadow:4px 0 0 #b0b0b0,4px -4px 0 #b0b0b0,0 4px 0 #b0b0b0,4px 4px 0 #b0b0b0,-4px 4px 0 #b0b0b0"></div>

<!-- TASKBAR -->
<div class="a" style="left:0;top:737px;width:1024px;height:9px;background:linear-gradient(#fafafa 0,#fafafa 1px,#35383c 1px,#35383c 2px,#62666b 2px)"></div>
<svg class="a" style="left:8px;top:733px" width="44" height="13" viewBox="0 0 44 13"><circle cx="21" cy="21" r="19.5" fill="#9fb4c2" stroke="#1c2a36" stroke-width="2.5"/><circle cx="21" cy="21" r="16.5" fill="#7f98a8"/><path d="M13 15 L20 13 L20 20 L13 20 Z" fill="#e8641c"/><path d="M22 13 L29 12 L29 20 L22 20 Z" fill="#6ab83a"/></svg>
<div class="a" style="left:161px;top:740px;width:158px;height:8px;border-radius:3px 3px 0 0;background:linear-gradient(#d8d8d8,#b8b8b8);border:1px solid #3a3a3a;box-shadow:inset 0 0 0 1px #e8e8e8"></div>
<div class="a" style="left:322px;top:740px;width:157px;height:8px;border-radius:3px 3px 0 0;background:#2a2b2d;border:1px solid #1a1a1a;box-shadow:inset 0 0 0 1px #6a6a6a"></div>
<div class="a" style="left:482px;top:740px;width:155px;height:8px;border-radius:3px 3px 0 0;background:linear-gradient(#d8d8d8,#b8b8b8);border:1px solid #3a3a3a;box-shadow:inset 0 0 0 1px #e8e8e8"></div>
<div class="a" style="left:643px;top:740px;width:155px;height:8px;border-radius:3px 3px 0 0;background:linear-gradient(#d8d8d8,#b8b8b8);border:1px solid #3a3a3a;box-shadow:inset 0 0 0 1px #e8e8e8"></div>
<div class="a" style="left:855px;top:740px;width:12px;height:6px;background:#e08030"></div>
<div class="a" style="left:880px;top:741px;width:8px;height:5px;background:#c0d0e0"></div>
<div class="a" style="left:905px;top:741px;width:8px;height:5px;background:#d0d0d0;border-radius:4px 4px 0 0"></div>
<div class="a" style="left:925px;top:741px;width:9px;height:5px;border:1px solid #e0e0e0"></div>
</body></html>
